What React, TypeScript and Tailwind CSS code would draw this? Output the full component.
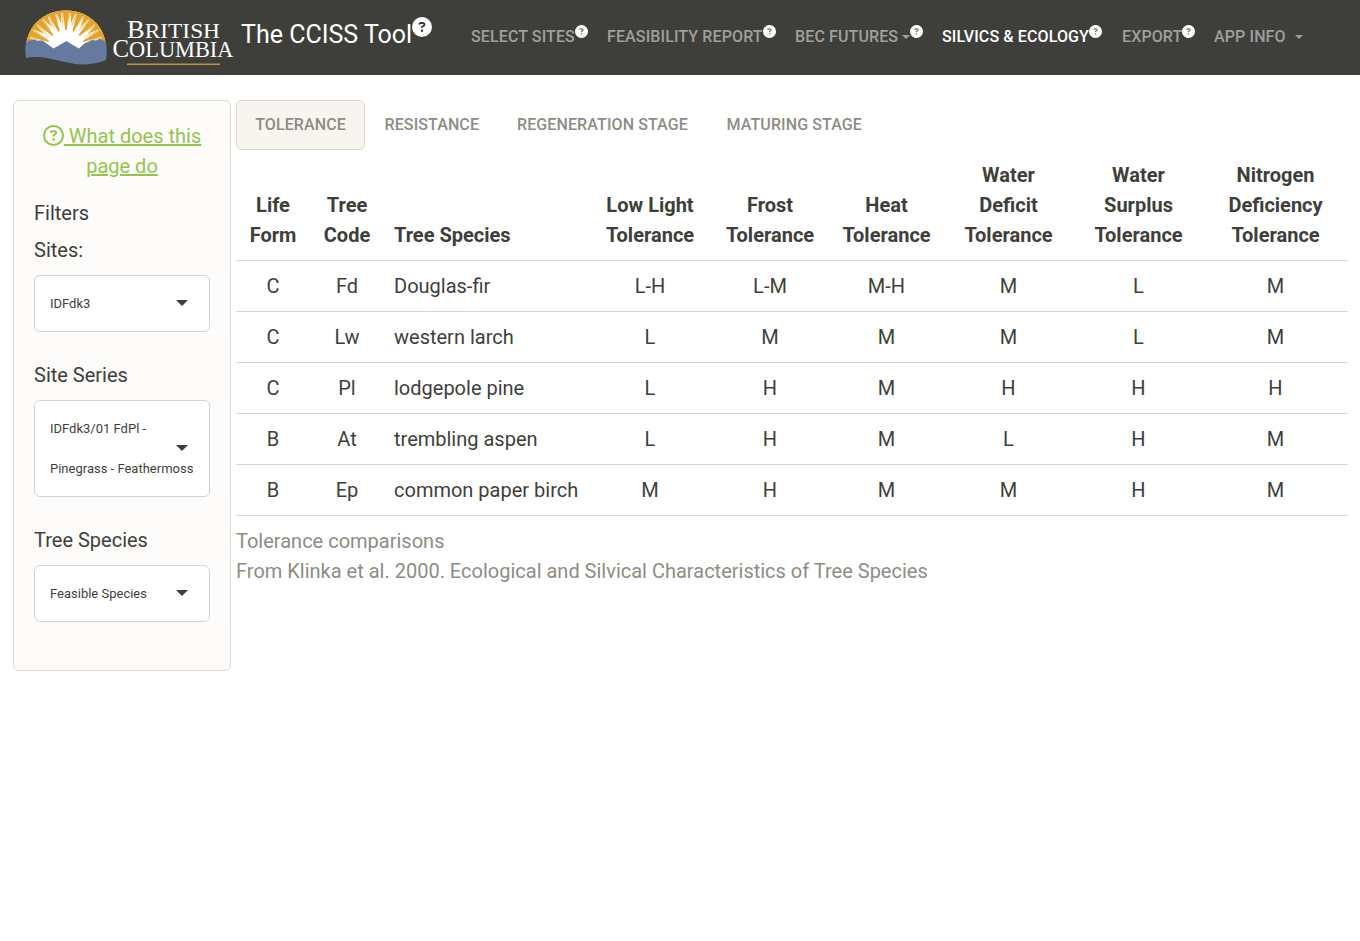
import React from "react";
import { FaCircleQuestion, FaRegCircleQuestion } from "react-icons/fa6";

const rayAngles = Array.from({ length: 17 }, (_, i) => -88 + i * 11);

function Logo() {
  return (
    <svg width="216" height="60" viewBox="22 7 216 60" className="shrink-0">
      <defs>
        <clipPath id="sun">
          <path d="M26 48C26 27 42 9.500 66 9.500S106 27 106 48Z" />
        </clipPath>
      </defs>
      <g clipPath="url(#sun)">
        <rect x="22" y="7" width="90" height="50" fill="#fff" />
        {rayAngles.map((a, i) => (
          <g key={a} transform={`rotate(${a} 66 48)`}>
            <path d={i % 2 ? "M66 22L62 3H70Z" : "M65.200 29H66.800L70 3H62Z"} fill="#e3a32c" />
            <path d="M66.200 28L69.500 3H74L67.200 25Z" fill="#e9b650" fillOpacity="0.65" />
          </g>
        ))}
        <path d="M26 48C26 27 42 9.500 66 9.500S106 27 106 48" fill="none" stroke="#e3a32c" strokeWidth="4" />
      </g>
      <path d="M26 42L28 40L32 39L34 38.500L38 40L42 39.300L46 42L53.300 47.500L58 45L66.500 40L72 43.500L79 47.500L85 42L88 41L92 39L96 39.500L100 37.800L106 41C107 46 107 53 106 59C98 62 90 63.800 81 63.500C66 62.500 54 57.500 41 56.300C35 55.500 30 56 26 57C25 51 25 46 26 42Z" fill="#66799f" />
      <g fill="#fff" className="[font-family:'Liberation_Serif',serif]">
        <text x="127" y="36.500" fontSize="25" textLength="93" lengthAdjust="spacingAndGlyphs">
          B<tspan fontSize="22">RITISH</tspan>
        </text>
        <text x="112.500" y="56.300" fontSize="25.500" textLength="121" lengthAdjust="spacingAndGlyphs">
          C<tspan fontSize="23">OLUMBIA</tspan>
        </text>
      </g>
      <rect x="127" y="62.500" width="93" height="1.500" fill="#b8923c" />
    </svg>
  );
}

function HelpBadge() {
  return (
    <span className="relative -top-[5px] inline-flex rounded-full bg-[#777771]">
      <FaCircleQuestion className="size-[13px] text-white" />
    </span>
  );
}

function Caret() {
  return <span className="inline-block border-x-4 border-t-4 border-x-transparent border-t-current" />;
}

function Select({ lines }: { lines: string[] }) {
  return (
    <div className="mt-[10px] flex items-center justify-between rounded-[6px] border border-[#ced4da] bg-white pb-[7px] pt-2 pl-[15px] text-[13px] leading-[40px]">
      <div className="w-[126px] whitespace-nowrap">
        {lines.map((l) => (
          <div key={l}>{l}</div>
        ))}
      </div>
      <span className="relative -top-px mr-[21px] border-x-[6px] border-t-[6px] border-x-transparent border-t-[#3e3f3a]" />
    </div>
  );
}

const columns = [
  ["Life", "Form"],
  ["Tree", "Code"],
  ["Tree Species"],
  ["Low Light", "Tolerance"],
  ["Frost", "Tolerance"],
  ["Heat", "Tolerance"],
  ["Water", "Deficit", "Tolerance"],
  ["Water", "Surplus", "Tolerance"],
  ["Nitrogen", "Deficiency", "Tolerance"],
];
const widths = [74, 74, 206, 120, 120, 113, 131, 129, 145];
const rows = [
  ["C", "Fd", "Douglas-fir", "L-H", "L-M", "M-H", "M", "L", "M"],
  ["C", "Lw", "western larch", "L", "M", "M", "M", "L", "M"],
  ["C", "Pl", "lodgepole pine", "L", "H", "M", "H", "H", "H"],
  ["B", "At", "trembling aspen", "L", "H", "M", "L", "H", "M"],
  ["B", "Ep", "common paper birch", "M", "H", "M", "M", "H", "M"],
];

export default function App() {
  return (
    <div className="min-h-[941px] bg-white text-[20px] leading-[30px] text-[#3e3f3a] [font-family:Roboto,sans-serif]">
      <header className="flex h-[75px] items-center bg-[#3e3f3a] pl-[22px]">
        <Logo />
        <div className="ml-[3px] flex w-[230px] shrink-0 items-center whitespace-nowrap pb-[5px] text-[25px] text-white">
          <span>The CCISS Tool</span>
          <FaCircleQuestion className="relative -top-[8px] size-[20px]" />
        </div>
        <nav className="flex items-center whitespace-nowrap pb-[2px] text-[16px] font-medium leading-6 tracking-[0.12px] text-[#9f9f9d]">
          <a className="flex w-[136px] items-center">SELECT SITES<HelpBadge /></a>
          <a className="flex w-[188px] items-center">FEASIBILITY REPORT<HelpBadge /></a>
          <a className="flex w-[147px] items-center">BEC FUTURES<span className="ml-1 flex"><Caret /></span><HelpBadge /></a>
          <a className="flex w-[180px] items-center text-white">SILVICS &amp; ECOLOGY<HelpBadge /></a>
          <a className="flex w-[92px] items-center">EXPORT<HelpBadge /></a>
          <a className="flex items-center">APP INFO<span className="ml-[9px] flex"><Caret /></span></a>
        </nav>
      </header>
      <div className="flex items-start pl-[13px] pt-[25px]">
        <aside className="h-[571px] w-[218px] shrink-0 rounded-[6px] border border-[#dfdcd2] bg-[#fdfcfb] px-5 pt-5">
          <a className="block text-center text-[#93c54b]">
            <FaRegCircleQuestion className="relative -top-[2px] inline size-[21px]" />
            <span className="underline"> What does this<br />page do</span>
          </a>
          <div className="mt-[17px]">Filters</div>
          <div className="mt-[7px]">Sites:</div>
          <Select lines={["IDFdk3"]} />
          <div className="mt-7">Site Series</div>
          <Select lines={["IDFdk3/01 FdPl -", "Pinegrass - Feathermoss"]} />
          <div className="mt-7">Tree Species</div>
          <Select lines={["Feasible Species"]} />
        </aside>
        <main className="ml-[5px] w-[1112px]">
          <div className="flex h-[50px] text-[16px] font-medium leading-6 tracking-[0.11px] text-[#8e8c84]">
            <div className="flex w-[129px] items-center justify-center rounded-[6px] border border-[#dfd7ca] bg-[#f8f5f0]">TOLERANCE</div>
            <div className="ml-[19.500px] flex w-[132.500px] items-center">RESISTANCE</div>
            <div className="flex w-[209.500px] items-center">REGENERATION STAGE</div>
            <div className="flex items-center">MATURING STAGE</div>
          </div>
          <table className="w-full table-fixed border-collapse text-center">
            <colgroup>
              {widths.map((w, i) => (
                <col key={i} style={{ width: w }} />
              ))}
            </colgroup>
            <thead>
              <tr className="h-[110px] border-b border-[#d5d5cf]">
                {columns.map((c, i) => (
                  <th key={i} className={"pb-[10px] align-bottom font-bold " + (i === 2 ? "pl-[10px] text-left" : "")}>
                    {c.map((l) => (
                      <div key={l}>{l}</div>
                    ))}
                  </th>
                ))}
              </tr>
            </thead>
            <tbody>
              {rows.map((r) => (
                <tr key={r[1]} className="h-[51px] border-b border-[#d5d5cf]">
                  {r.map((v, i) => (
                    <td key={i} className={i === 2 ? "pl-[10px] text-left" : ""}>{v}</td>
                  ))}
                </tr>
              ))}
            </tbody>
          </table>
          <div className="mt-[10px] text-[#8e8c84]">
            <div>Tolerance comparisons</div>
            <div>From Klinka et al. 2000. Ecological and Silvical Characteristics of Tree Species</div>
          </div>
        </main>
      </div>
    </div>
  );
}
